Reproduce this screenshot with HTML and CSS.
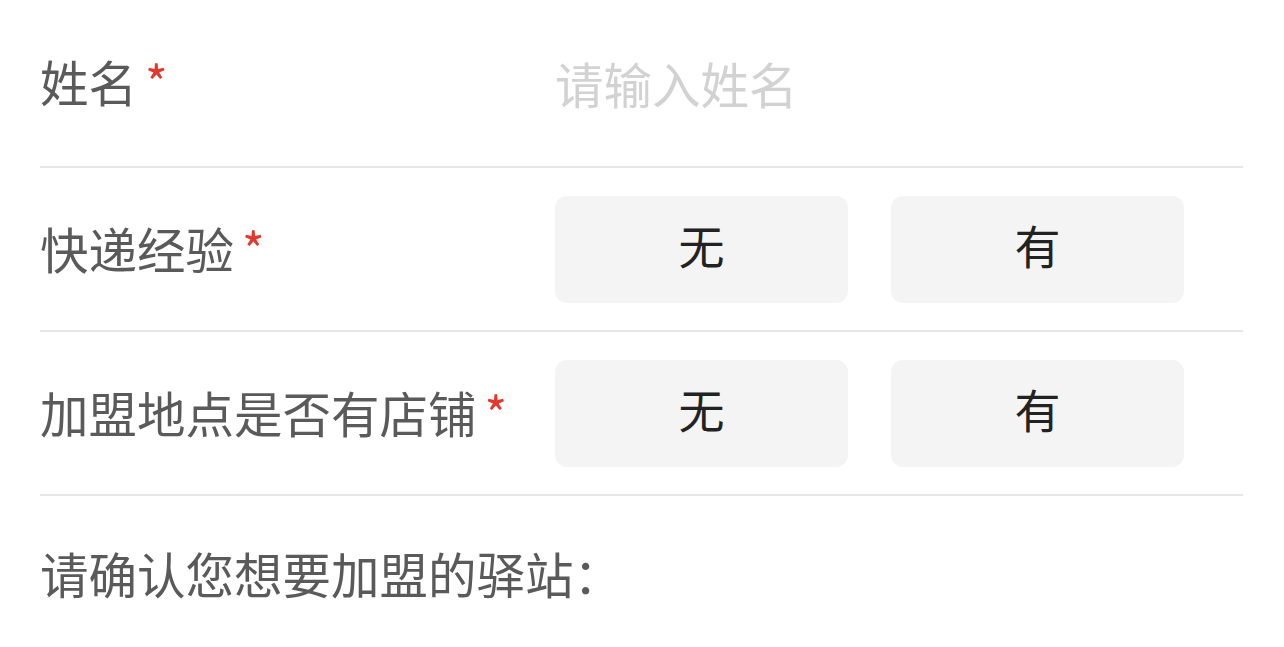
FILE: index.html
```html
<!DOCTYPE html>
<html lang="zh-CN">
<head>
<meta charset="utf-8">
<link rel="stylesheet" href="styles.css">
</head>
<body>
<div class="form">
  <div class="row row-first">
    <div class="label">姓名<span class="req">*</span></div>
    <div class="value"><span class="placeholder">请输入姓名</span></div>
  </div>
  <div class="row row-opt">
    <div class="label">快递经验<span class="req">*</span></div>
    <div class="value opts">
      <div class="opt">无</div>
      <div class="opt">有</div>
    </div>
  </div>
  <div class="row row-opt">
    <div class="label">加盟地点是否有店铺<span class="req">*</span></div>
    <div class="value opts">
      <div class="opt">无</div>
      <div class="opt">有</div>
    </div>
  </div>
  <div class="note">请确认您想要加盟的驿站：</div>
</div>
</body>
</html>
```

FILE: styles.css
```css
* { box-sizing: border-box; }
html, body { margin: 0; padding: 0; background: #fff; }
body {
  font-family: "Noto Sans CJK SC", "Noto Sans", sans-serif;
  font-weight: 400;
  width: 1284px;
  height: 647px;
  overflow: hidden;
}
.form { padding: 0 41px 0 40px; }
.row {
  display: flex;
  align-items: center;
  border-bottom: 2px solid #e6e6e6;
}
.row-first { height: 168px; padding-top: 0; }
.row-opt { height: 164px; padding: 1px 0 0; }
.label {
  width: 515px;
  flex: none;
  font-size: 48.5px;
  line-height: 66px;
  padding-bottom: 4px;
  color: #5a5a5a;
  white-space: nowrap;
}
.req {
  color: #e2382e;
  margin-left: 8px;
}
.value { flex: 1; }
.placeholder {
  font-size: 48.5px;
  line-height: 66px;
  color: #d2d2d2;
}
.opts { display: flex; gap: 43px; }
.opt {
  width: 293px;
  height: 107px;
  border-radius: 12px;
  background: #f4f4f4;
  display: flex;
  align-items: center;
  justify-content: center;
  font-size: 46px;
  padding-bottom: 12px;
  color: #222;
}
.note {
  padding-top: 44px;
  font-size: 48.5px;
  line-height: 66px;
  color: #5a5a5a;
}
```
